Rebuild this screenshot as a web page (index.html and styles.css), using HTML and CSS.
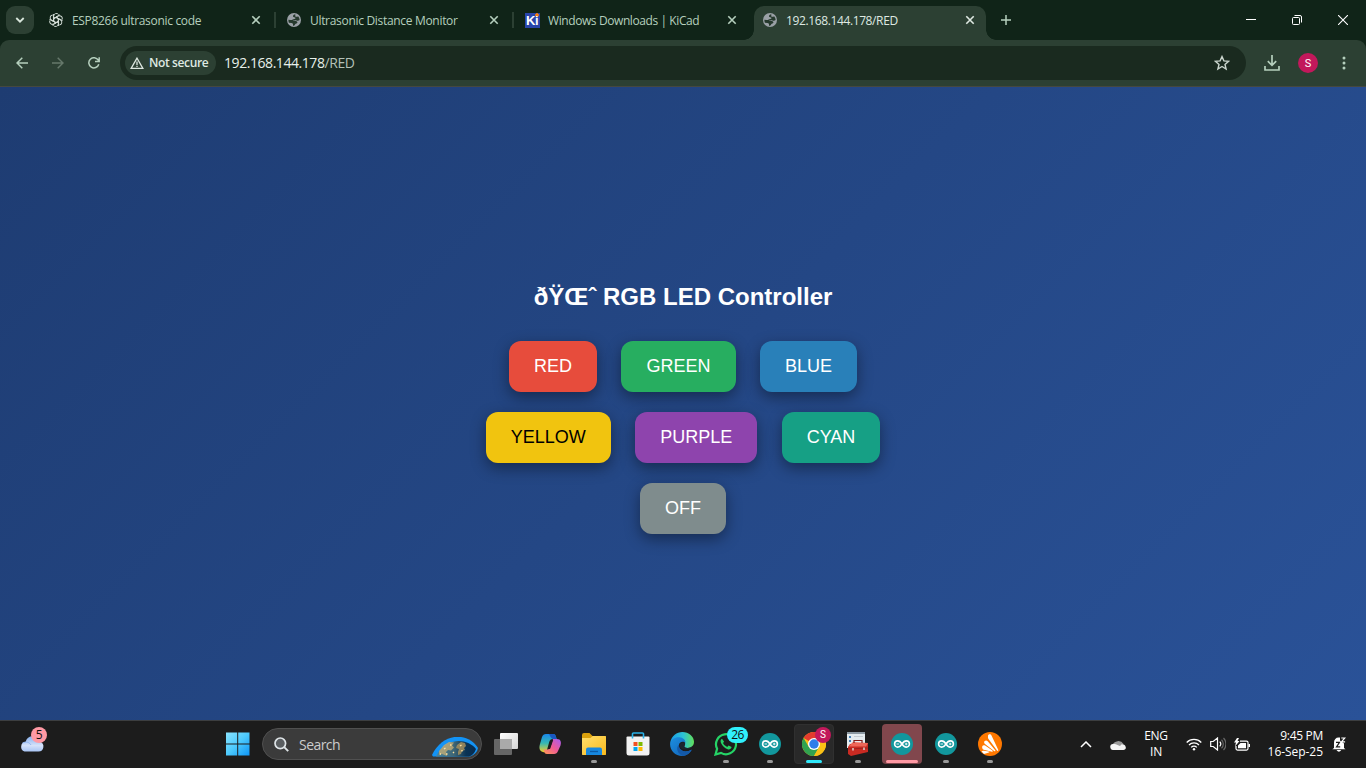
FILE: index.html
```html
<!DOCTYPE html>
<html lang="en">
<head>
<meta charset="utf-8">
<title>192.168.144.178/RED</title>
<link rel="stylesheet" href="styles.css">
</head>
<body>
<svg class="defs" width="0" height="0" aria-hidden="true">
  <defs>
    <linearGradient id="win" gradientUnits="userSpaceOnUse" x1="0" y1="0" x2="24" y2="24"><stop offset="0" stop-color="#8be4ff"/><stop offset=".5" stop-color="#4cc9fc"/><stop offset="1" stop-color="#0a92f5"/></linearGradient>
    <linearGradient id="cloud" x1="0" y1="0" x2="0" y2="1"><stop offset="0" stop-color="#86b0ee"/><stop offset=".6" stop-color="#d5e2fa"/><stop offset="1" stop-color="#a9c5f4"/></linearGradient>
    <linearGradient id="folder" x1="0" y1="0" x2="1" y2="1"><stop offset="0" stop-color="#ffdf6e"/><stop offset="1" stop-color="#f8b91c"/></linearGradient>
    <linearGradient id="cpA" x1="0" y1="0" x2="0" y2="1"><stop offset="0" stop-color="#1987ea"/><stop offset=".5" stop-color="#35b7b4"/><stop offset="1" stop-color="#f2cf2a"/></linearGradient>
    <linearGradient id="cpB" x1="1" y1="0" x2="0" y2="1"><stop offset="0" stop-color="#a65bf2"/><stop offset=".5" stop-color="#ef5a96"/><stop offset="1" stop-color="#ff9b54"/></linearGradient>
    <linearGradient id="edgeA" x1="0" y1=".4" x2="1" y2=".4"><stop offset="0" stop-color="#1a9be8"/><stop offset=".55" stop-color="#2cc3d5"/><stop offset="1" stop-color="#62df59"/></linearGradient>
    <linearGradient id="edgeB" x1="0" y1="0" x2="1" y2="1"><stop offset="0" stop-color="#1c8fe0"/><stop offset="1" stop-color="#1160b5"/></linearGradient>
    <linearGradient id="earth" x1="0" y1="0" x2="1" y2="0"><stop offset="0" stop-color="#4a86a0"/><stop offset=".45" stop-color="#3f6674"/><stop offset=".75" stop-color="#0a3354"/><stop offset="1" stop-color="#062b50"/></linearGradient>
    <linearGradient id="task" x1="0" y1="0" x2="1" y2="1"><stop offset="0" stop-color="#fff"/><stop offset="1" stop-color="#d4d4d4"/></linearGradient>
    <symbol id="close" viewBox="0 0 10 10"><path d="M1.300 1.300l7.400 7.400M8.700 1.300L1.300 8.700" stroke="currentColor" stroke-width="1.600" fill="none"/></symbol>
    <symbol id="globe" viewBox="0 0 14 14"><circle cx="7" cy="7" r="7" fill="#9aa0a6"/><path d="M8.300 1.300C7 1.500 5.700 2.500 6 3.600c.3 1 1.900.8 2.600 1.300-.5 1.200-2 .8-2.900 1.500-.7.600-1.300.600-2.200.500L1.400 6.800c-.1 1.200.1 2 .5 2.900l2.600.3c1.300.2 1.700 1 1.500 2.700 1.600 0 1.900-.6 2.200-1.500.500-.9 1.800-.4 2.200-1.600.200-.9-.6-1.300-1.500-1.700C7.500 7.400 6.900 7.700 6 7.300c1.200-.5 2.300-.3 3.400.1 1.300.400 2.200.300 3.200-.5-.1-1.400-.5-2.500-1.500-3.700-.900.700-1.900.800-2.800.200z" fill="#26392d"/></symbol>
    <symbol id="arduino" viewBox="0 0 22 22"><circle cx="11" cy="11" r="11" fill="#12979d"/><path d="M11 11C9.600 8.800 8.500 7.900 6.700 7.900a3.100 3.100 0 0 0 0 6.200c1.800 0 2.900-.9 4.300-3.100s2.500-3.100 4.300-3.100a3.100 3.100 0 0 1 0 6.200c-1.800 0-2.900-.9-4.300-3.100z" fill="none" stroke="#fff" stroke-width="1.600"/><path d="M5.500 11h2.600M13.900 11h2.600M15.200 9.700v2.600" stroke="#fff" stroke-width=".9"/></symbol>
  </defs>
</svg>

<header class="tabstrip">
  <button class="tab-search"><svg width="10" height="6" viewBox="0 0 10 6"><path d="M1.300 1l3.700 3.700L8.700 1" fill="none" stroke="#d9e6dc" stroke-width="1.800"/></svg></button>
  <nav class="tabs">
    <div class="tab">
      <svg class="favicon" viewBox="-7 -7 14 14" fill="none" stroke="#d5dfd8" stroke-width=".95">
        <g id="petal"><path d="M-2.300 1.500V-3.800A2.700 2.700 0 0 1 2.600-5.400M-.2-2.900L3.900-5.200M-2.300-1.300L.3-2.900 2.300-1.600"/></g>
        <use href="#petal" transform="rotate(60)"/><use href="#petal" transform="rotate(120)"/><use href="#petal" transform="rotate(180)"/><use href="#petal" transform="rotate(240)"/><use href="#petal" transform="rotate(300)"/>
      </svg>
      <span class="tab-title t1">ESP8266 ultrasonic code</span><svg class="close"><use href="#close"/></svg>
    </div>
    <div class="tab">
      <svg class="favicon"><use href="#globe"/></svg>
      <span class="tab-title t2">Ultrasonic Distance Monitor</span><svg class="close"><use href="#close"/></svg>
    </div>
    <div class="tab last-idle">
      <span class="kicad">Ki</span>
      <span class="tab-title t3">Windows Downloads | KiCad</span><svg class="close"><use href="#close"/></svg>
    </div>
    <div class="tab active">
      <svg class="favicon"><use href="#globe"/></svg>
      <span class="tab-title t4">192.168.144.178/RED</span><svg class="close"><use href="#close"/></svg>
    </div>
  </nav>
  <svg class="plus" width="10" height="10" viewBox="0 0 10 10"><path d="M5 0v10M0 5h10" stroke="#b5cfbd" stroke-width="1.500"/></svg>
  <div class="window-controls">
    <svg width="10" height="10"><path d="M0 4.500h10" stroke="#fff"/></svg>
    <svg width="10" height="10" fill="none" stroke="#fff"><rect x=".5" y="2.500" width="7" height="7" rx="1"/><path d="M2.500.5H8A1.500 1.500 0 0 1 9.500 2v5.500"/></svg>
    <svg width="10" height="10"><path d="M0 0l10 10M10 0L0 10" stroke="#fff" stroke-width="1.100"/></svg>
  </div>
</header>

<div class="toolbar">
  <div class="nav-buttons">
    <svg width="12" height="12" viewBox="0 0 12 12" fill="none" stroke="#b5cfbd" stroke-width="1.500"><path d="M12 6H1M6.300.7L1 6l5.300 5.300"/></svg>
    <svg width="12" height="12" viewBox="0 0 12 12" fill="none" stroke="#66786b" stroke-width="1.500"><path d="M0 6h11M5.700.7L11 6l-5.300 5.300"/></svg>
    <svg width="12" height="12" viewBox="0 0 12 12" fill="none" stroke="#b5cfbd" stroke-width="1.500"><path d="M10.800 7.300A5.100 5.100 0 1 1 10.300 3.200L11 4.200M11.200.2v4.200H7"/></svg>
  </div>
  <div class="omnibox">
    <div class="security">
      <svg width="14" height="12" viewBox="0 0 14 12" fill="none" stroke="#dce6df" stroke-width="1.300"><path d="M7 1.200L1.100 11.300h11.800zM7 4.500v3.400M7 8.800v1.200"/></svg>
      <span>Not secure</span>
    </div>
    <span class="url">192.168.144.178<i>/RED</i></span>
    <svg class="star" width="16" height="16" viewBox="0 0 16 16"><path d="M8 1.600l1.900 4.300 4.700.4L11 9.400l1.100 4.600L8 11.500 3.900 14 5 9.400 1.400 6.300l4.700-.4z" fill="none" stroke="#cbd6ce" stroke-width="1.400"/></svg>
  </div>
  <div class="actions">
    <svg width="16" height="16" viewBox="0 0 16 16" fill="none" stroke="#b5cfbd" stroke-width="1.700"><path d="M8 0v10M3.800 6.200L8 10.400l4.200-4.200M1 11v4h14v-4"/></svg>
    <span class="avatar">S</span>
    <svg class="kebab" width="4" height="14" fill="#b5cfbd"><circle cx="2" cy="2" r="1.500"/><circle cx="2" cy="7" r="1.500"/><circle cx="2" cy="12" r="1.500"/></svg>
  </div>
</div>

<main class="page">
  <h1>ðŸŒˆ RGB LED Controller</h1>
  <div class="row"><button class="btn red">RED</button><button class="btn green">GREEN</button><button class="btn blue">BLUE</button></div>
  <div class="row"><button class="btn yellow">YELLOW</button><button class="btn purple">PURPLE</button><button class="btn cyan">CYAN</button></div>
  <div class="row"><button class="btn off">OFF</button></div>
</main>

<footer class="taskbar">
  <div class="weather">
    <svg width="25" height="18" viewBox="0 0 25 18"><path d="M5.500 17.500h14a5 5 0 0 0 1.300-9.800A7.300 7.300 0 0 0 6.700 7.800 5 5 0 0 0 5.500 17.500z" fill="url(#cloud)"/><path d="M3.500 9c4-2 7-.5 8.500 2" fill="none" stroke="#8fb3ed"/></svg>
    <span class="count pink">5</span>
  </div>
  <svg class="start" width="24" height="24" viewBox="0 0 24 24" fill="url(#win)"><path d="M0 .5h11.200v11H0zM12.200.5H23.500v11H12.200zM0 12.500h11.200v11H0zM12.200 12.500H23.500v11H12.200z"/></svg>
  <div class="search">
    <svg width="15" height="15" viewBox="0 0 15 15"><circle cx="6.300" cy="6.300" r="5.300" fill="#5a5e61" stroke="#dfe5e8" stroke-width="1.700"/><path d="M10.200 10.200l4 4" stroke="#dfe5e8" stroke-width="1.900"/></svg>
    <span>Search</span>
    <svg class="earth" width="47" height="20" viewBox="0 0 47 20"><path d="M0 18C11-5 36-5 46 11Q45 17 38 19.500H1z" fill="#1393f5"/><path d="M4 19.500C13 1 34 0 44 12Q42 18 37 19.500z" fill="url(#earth)"/><path d="M7 14l5-6 5-3 5 .5-2 3 2 2-3 3-3-.5-2 2 1 4-5-2-3 1z" fill="#b9a877" fill-opacity=".85"/><path d="M25 8l4-3 4 1 1 3-2 2 1 2-3 1-1 3-3 1 0-3 1-3-3-1z" fill="#a58f5d" fill-opacity=".85"/><path d="M12 12l1.500-1M18 8h1.500M28 9l1.500-1M30 13v1.500M14 17h1.500M21 15l1 1M8 17h1" stroke="#ffe2a0" stroke-width="1.400"/></svg>
  </div>
  <div class="apps">
    <div class="app"><svg width="24" height="22" viewBox="0 0 24 22"><path d="M7 0h16q1 0 1 1v14q0 1-1 1H7q-1 0-1-1V1q0-1 1-1z" fill="url(#task)"/><rect y="6" width="18" height="16" rx="1" fill="#666"/><path d="M6 6h12v10H6z" fill="#aaa"/></svg></div>
    <div class="app"><svg width="24" height="24" viewBox="0 0 24 24"><path d="M8 2h7c2 0 2.500 1.200 3 3l.7 2h-4c-2 0-2.800 1-3.500 3L9 18c-.7 2-2 2.500-4 2-4-.8-4-5-3-8l2-7c.7-2 2-3 4-3z" fill="url(#cpA)"/><path d="M11 2h4c2 0 2.500 1.200 3 3l.7 2h-3c-2 0-3-1.500-4.700-5z" fill="#1957c2"/><path d="M16 22H9c-2 0-2.500-1.200-3-3l-.5-1.500h3.700c2 0 2.800-1 3.500-3L15 7h4c4 0 4.500 3.500 3.500 6.500L20 19c-.7 2-2 3-4 3z" fill="url(#cpB)"/><path d="M14 8h1.200L12 17h-1.600z" fill="#1e1c20"/></svg></div>
    <div class="app running"><svg width="24" height="22" viewBox="0 0 24 22"><path d="M0 2Q0 0 2 0h5.500l3 3H23q1 0 1 1v17q0 1-1 1H1q-1 0-1-1z" fill="#dba10d"/><path d="M0 5h8.500l2.200-2H23q1 0 1 1v17q0 1-1 1H1q-1 0-1-1z" fill="url(#folder)"/><path d="M4 22v-5.500q0-2 2-2h12q2 0 2 2V22z" fill="#1788df"/><path d="M8 18.500h8" stroke="#0b5aa6" stroke-width="1.300"/></svg></div>
    <div class="app"><svg width="24" height="24" viewBox="0 0 24 24"><path d="M1.500 4.500h21q1 0 1 1V21q0 2.500-2.500 2.500H3Q.5 23.500.5 21V5.500q0-1 1-1z" fill="#f2f2f2"/><path d="M6.500 6.500V1.700Q6.500 1 7.500 1h9q1 0 1 .7v4.800" fill="none" stroke="#28b3ea" stroke-width="1.600"/><path fill="#f25022" d="M7.500 10h4v4h-4z"/><path fill="#7fba00" d="M12.500 10h4v4h-4z"/><path fill="#00a4ef" d="M7.500 15h4v4h-4z"/><path fill="#ffb900" d="M12.500 15h4v4h-4z"/></svg></div>
    <div class="app"><svg width="24" height="24" viewBox="0 0 24 24"><path d="M.2 11C1.500 3.500 6.800 0 12.300 0 19 0 24 4.600 24 9.800c0 4-3 6.200-6.200 6.200-3 0-4.300-1-3.200-2.300 1.200-1.500.9-5.700-4.100-5.700C6 8 0 11 .2 11z" fill="url(#edgeA)"/><path d="M.1 11.500C1 7.500 5 5 9.300 5.300c4 .3 6.400 3 6.200 5.700-2-2.300-6.300-1.600-6.700 2.500-.4 4.700 5.600 8.200 13 4C19.800 21.800 16 24 12 24 5 24-.4 18.200.1 11.500z" fill="url(#edgeB)"/><path d="M8.800 13c.2 5.500 6.600 8.500 13 4.700-2.400 4-5.600 6-9 6.200-5-1.800-7.500-8-4-10.900z" fill="#1459a8"/><path d="M9.500 13.200c.3-2.800 3.200-4 5.500-2.200.1.800-.1 1.500-.5 2.200-.8 1.200.3 2.700 3.200 2.800 2.200 0 4-.7 5.300-1.900-1 2.100-3.200 3.400-6.500 3.400-4 0-7.200-1.600-7-4.300z" fill="#1c2530"/></svg></div>
    <div class="app running"><svg width="24" height="24" viewBox="0 0 24 24"><path d="M1.500 22.500l1.600-5.700A10 10 0 1 1 7 20.900z" fill="#1c1c1c" stroke="#25d366" stroke-width="2.200"/><path d="M8 6.800c-1.600.8-1.700 2.500-1 4.200 1.300 3 3.700 5.200 6.600 6.200 1.700.6 3.700-.2 4-2.200l-3-1.600-1.400 1.500c-2-.8-3.400-2.100-4.200-3.800l1.100-1.300z" fill="#25d366"/></svg><span class="count aqua">26</span></div>
    <div class="app running"><svg width="22" height="22"><use href="#arduino"/></svg></div>
    <div class="app open"><svg width="24" height="24" viewBox="0 0 24 24"><circle cx="12" cy="12" r="12" fill="#fbc116"/><path d="M12 12L1.600 6A12 12 0 0 1 22.400 6z" fill="#e33b2e"/><path d="M1.600 6A12 12 0 0 0 12 24l5.200-9L12 12 6.800 15z" fill="#31a350"/><path d="M12 6h10.400A12 12 0 0 1 12 24l5.200-9z" fill="#fbc116"/><circle cx="12" cy="12" r="6" fill="#fff"/><circle cx="12" cy="12" r="4.700" fill="#2f7de9"/></svg><span class="avatar badge">S</span></div>
    <div class="app running"><svg width="24" height="24" viewBox="0 0 24 24"><path d="M1 0h18v16H1z" fill="#e5edf1"/><path d="M1 0h18v2H1z" fill="#8c99a3"/><path d="M3 4h2v2H3zM3 8h2v2H3z" fill="#4682b9"/><path d="M8 4.500h9" stroke="#c6ced4"/><path d="M2 15l2-3 18-1v9L5 24l-3-2z" fill="#c92a22"/><path d="M2.500 14.500L7 10l15 1-2 3.500z" fill="#ef6759"/><path d="M8 11V8.500h8V11" fill="none" stroke="#821b18" stroke-width="1.200"/><path d="M2 17l20-1" stroke="#96201b" stroke-width=".8"/><path d="M7 16v2.500M18 15.500V18" stroke="#e2d4d2" stroke-width="1.500"/></svg></div>
    <div class="app alert"><svg width="22" height="22"><use href="#arduino"/></svg></div>
    <div class="app running"><svg width="22" height="22"><use href="#arduino"/></svg></div>
    <div class="app running"><svg width="24" height="24" viewBox="0 0 24 24"><circle cx="12" cy="12" r="12" fill="#ff7800"/><path d="M10 4c0-2 2.800-2.200 3.500-.5l6.700 14.300c.5 1-.5 1.600-1.200.8L10.500 7C9.800 6 10 5 10 4zM6.700 9c1-1 2.200-.6 3 .2l7.500 9c.6.700 0 1.500-.8 1L7 12c-1.200-1-1-2.300-.3-3zM4.300 14.200c.5-1 1.700-1.300 2.800-.6l7.300 5c.8.6.4 1.300-.4 1.100l-8.200-2c-1.500-.5-2-2.300-1.500-3.500zM3.600 19.500c.4-.8 1.300-1 2.300-.8l5 .9c.8.200.7.900 0 1L6 22z" fill="#fff"/></svg></div>
  </div>
  <div class="tray">
    <svg class="chev" width="12" height="7" viewBox="0 0 12 7"><path d="M1 6l5-5 5 5" fill="none" stroke="#fff" stroke-width="1.500"/></svg>
    <svg class="onedrive" width="16" height="11" viewBox="0 0 16 11"><path d="M2.500 6A6 5.500 0 0 1 13.500 5L8 8z" fill="#999"/><path d="M3.500 11a3 3 0 0 1-.5-6c2-.3 3 0 4.500 1L10 7c1-2.500 5-2.500 5.700 1 .5 1.500-.7 3-2.200 3z" fill="#f4f4f4"/></svg>
    <div class="lang"><span>ENG</span><span>IN</span></div>
    <svg class="wifi" width="16" height="13" viewBox="0 0 16 13" fill="none" stroke="#fff" stroke-width="1.300"><path d="M.7 4.500a10.300 10.300 0 0 1 14.600 0M3 7a7.100 7.100 0 0 1 10 0M5.200 9.400a4 4 0 0 1 5.600 0"/><circle cx="8" cy="11.300" r="1.200" fill="#fff" stroke="none"/></svg>
    <svg class="volume" width="16" height="14" viewBox="0 0 16 14" fill="none" stroke="#fff" stroke-width="1.200"><path d="M.7 4.500h2.500L7.500 1v12L3.200 9.500H.7zM9.700 4.700a3.300 3.300 0 0 1 0 4.600"/><path d="M11.500 2.700a6 6 0 0 1 0 8.600M13.500 1a8.600 8.600 0 0 1 0 12" stroke="#666"/></svg>
    <svg class="battery" width="16" height="13" viewBox="0 0 16 13"><path d="M6 3.100h6.500q1.500 0 1.500 1.500v6q0 1.500-1.500 1.500h-9Q2 12.100 2 10.600V8" fill="none" stroke="#fff" stroke-width="1.200"/><path d="M6.500 5H12v5.200H4V7.500zM14.500 6H16v3h-1.500zM3 0L0 4.500h2L1 8.500 5.500 3H3.500L5 0z" fill="#fff"/></svg>
    <div class="clock"><span>9:45 PM</span><span class="date">16-Sep-25</span></div>
    <svg class="bell" width="14" height="15" viewBox="0 0 14 15"><path d="M2 11V5.500C2 2.500 4 .5 6.500.5H8v3l4 3V11l1.500 1.300H.3zM4.500 13h4.800q-2.400 3.300-4.800 0z" fill="#fff"/><path d="M4 5.300h3.500L4.500 9.800h3.700" fill="none" stroke="#1c1c1c" stroke-width="1.200"/><path d="M9.300 1h3.500L9.500 4.900h3.600" fill="none" stroke="#fff" stroke-width="1.200"/></svg>
  </div>
</footer>
</body>
</html>
```

FILE: styles.css
```css
* { box-sizing: border-box; }
html, body { height: 100%; }
body { margin: 0; overflow: hidden; display: flex; flex-direction: column; background: #102418; font-family: "Open Sans", "Noto Sans", sans-serif; }
button { font: inherit; border: 0; }
svg { display: block; flex: none; }
.defs { position: absolute; }

.tabstrip { height: 40px; flex: none; display: flex; align-items: center; padding-left: 6px; background: #102418; }
.tab-search { width: 28px; height: 28px; padding: 0; border-radius: 9px; background: #2c4033; display: grid; place-items: center; }
.tabs { display: flex; align-self: stretch; padding: 6px 0 0 5px; }
.tab { position: relative; width: 238px; display: flex; align-items: center; padding: 0 14px 6px 10px; color: #b5cfbd; }
.tab:not(.active):not(.last-idle)::after { content: ""; position: absolute; right: 1px; top: 6px; width: 2px; height: 16px; background: #2c4033; }
.favicon { width: 14px; height: 14px; }
.kicad { width: 15px; height: 15px; background: radial-gradient(circle at 12px 2px, #f47c14 0 1.500px, #2945aa 2px); color: #fff; font: bold 13px/15px "Liberation Sans", sans-serif; letter-spacing: -.5px; padding-left: 1px; margin-right: -1px; }
.tab-title { margin-left: 9px; padding-top: 1px; flex: 1; font-size: 12px; line-height: 19px; white-space: nowrap; }
.t1 { letter-spacing: -.32px; }
.t2 { letter-spacing: -.31px; }
.t3 { letter-spacing: -.41px; }
.t4 { letter-spacing: -.38px; }
.close { width: 10px; height: 10px; margin-right: 2px; }
.active { width: 232px; margin-left: 1px; padding-left: 9px; padding-right: 9px; background: #2c4033; border-radius: 10px 10px 0 0; color: #dfe9e2; }
.active::before, .active::after { content: ""; position: absolute; bottom: 0; width: 10px; height: 10px; }
.active::before { right: 100%; background: radial-gradient(circle at 0 0, transparent 9.500px, #2c4033 10px); }
.active::after { left: 100%; background: radial-gradient(circle at 100% 0, transparent 9.500px, #2c4033 10px); }
.plus { margin-left: 15px; }
.window-controls { margin-left: auto; display: flex; gap: 36px; padding-right: 18px; }

.toolbar { height: 47px; flex: none; display: flex; align-items: center; padding: 0 20px 1px 16px; background: #2c4033; border-bottom: 1px solid #45483f; border-radius: 9px 9px 0 0; }
.nav-buttons { display: flex; gap: 24px; }
.omnibox { width: 1126px; height: 34px; margin-left: 20px; border-radius: 17px; background: #1a2a1f; display: flex; align-items: center; padding: 0 16px 0 5px; }
.security { width: 91px; height: 24px; border-radius: 12px; background: #2c4033; display: flex; align-items: center; gap: 5px; padding-left: 5px; color: #dfe9e2; font-size: 12px; font-weight: 600; letter-spacing: -.38px; white-space: nowrap; }
.url { margin-left: 8px; font-size: 14px; line-height: 20px; letter-spacing: -.44px; color: #e8f0ea; }
.url i { font-style: normal; color: #b4c1b7; }
.star { margin-left: auto; }
.actions { display: flex; align-items: center; gap: 18px; margin-left: 18px; }
.avatar { width: 20px; height: 20px; border-radius: 50%; background: #c2185b; color: #fff; font: 11px/21px Roboto, sans-serif; text-align: center; }
.kebab { margin-left: 6px; }

.page { flex: 1; display: flex; flex-direction: column; align-items: center; padding-top: 196px; gap: 20px; background: linear-gradient(135deg, #1e3c72, #2a5298); font-family: "Liberation Sans", Arial, sans-serif; }
.page h1 { margin: 0 0 10px; font-size: 24px; line-height: 28px; color: #fff; white-space: nowrap; }
.row { display: flex; justify-content: center; gap: 24.500px; }
.btn { height: 51px; padding: 0 25px; border-radius: 12px; font-size: 18px; line-height: 51px; color: #fff; box-shadow: 0 5px 15px rgba(0, 0, 0, .4); }
.red { background: #e74c3c; }
.green { background: #27ae60; }
.blue { background: #2980b9; }
.yellow { background: #f1c40f; color: #000; }
.purple { background: #8e44ad; }
.cyan { background: #16a085; }
.off { background: #7f8c8d; }

.taskbar { height: 48px; flex: none; display: flex; align-items: center; padding-bottom: 1px; background: #1c1c1c; border-top: 1px solid #3c3e40; color: #fff; }
.weather { position: relative; width: 206px; padding: 0 0 6px 19px; margin-top: 3px; }
.count { position: absolute; height: 16px; border-radius: 8px; color: #111; font-size: 12px; line-height: 16px; text-align: center; letter-spacing: -.5px; }
.pink { left: 31px; top: -7px; width: 16px; background: #ff99a4; }
.aqua { left: 21px; top: 3px; width: 21px; background: #30f0fc; }
.start { margin-left: 20px; }
.search { width: 220px; height: 32px; margin-left: 12px; border: 1px solid #505050; border-radius: 16px; background: #3b3b3b; display: flex; align-items: center; padding-left: 11px; }
.search span { margin-left: 10px; font-size: 14px; letter-spacing: -.55px; color: #ccc; }
.earth { margin-left: auto; align-self: flex-end; margin-right: 2px; margin-bottom: 2px; }
.apps { display: flex; gap: 4px; margin-left: 4px; }
.app { position: relative; width: 40px; height: 40px; display: grid; place-items: center; border-radius: 4px; }
.running::after { content: ""; position: absolute; left: 17px; bottom: 1px; width: 6px; height: 3px; border-radius: 2px; background: #999; }
.open { background: #292929; border: 1px solid #303030; }
.open::after { content: ""; position: absolute; left: 11px; bottom: 0; width: 16px; height: 3px; border-radius: 2px; background: #30e8fa; }
.alert { background: #81474d; }
.alert::after { content: ""; position: absolute; left: 4px; bottom: 1px; width: 32px; height: 3px; border-radius: 2px; background: #ff99a4; }
.badge { position: absolute; left: 20px; top: 2px; width: 16px; height: 16px; font-size: 10px; line-height: 16px; }
.tray { margin-left: auto; display: flex; align-items: center; padding-right: 20px; }
.lang, .clock { display: flex; flex-direction: column; font-size: 12px; line-height: 16px; letter-spacing: -.3px; }
.lang { width: 28px; align-items: center; margin-left: 16px; }
.clock { width: 62px; align-items: flex-end; margin-left: 11px; white-space: nowrap; }
.date { letter-spacing: -.05px; }
.onedrive { margin-left: 18px; }
.wifi { margin-left: 16px; }
.volume { margin-left: 8px; }
.battery { margin-left: 8px; }
.bell { margin-left: 9px; }
```
